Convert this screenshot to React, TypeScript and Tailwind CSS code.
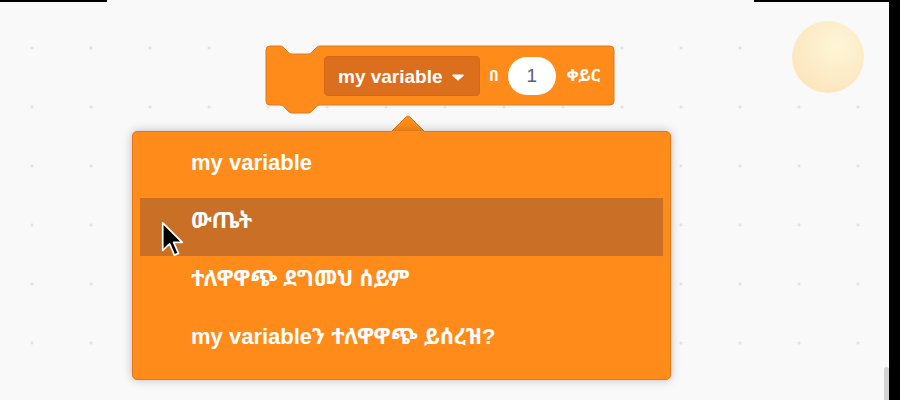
import React from "react";

const menuItems = [
  { label: "my variable" },
  { label: "ውጤት", active: true },
  { label: "ተለዋዋጭ ደግመህ ሰይም" },
  { label: "my variableን ተለዋዋጭ ይሰረዝ?" },
];

const font = {
  fontFamily:
    '"Liberation Sans", "Noto Sans Ethiopic", "Abyssinica SIL", "Noto Sans", sans-serif',
};

function Cursor() {
  return (
    <svg width="24" height="38" viewBox="-1 -1 14 22" className="absolute left-[161px] top-[221px]">
      <path
        d="M0,0 L0,16 L4,12.2 L6.8,18.8 L9.2,17.8 L6.4,11.4 L11.4,11.4 Z"
        fill="#000"
        stroke="#fff"
        strokeWidth={1}
        strokeLinejoin="round"
      />
    </svg>
  );
}

function Block() {
  return (
    <>
      {/* block shape */}
      <svg width="352" height="72" className="absolute left-[265px] top-[45px]">
        <path
          d="M1,5 A4,4 0 0 1 5,1 H15 c2,0 3,1 4,2 l4,4 c1,1 2,2 4,2 h16 c2,0 3,-1 4,-2 l4,-4 c1,-1 2,-2 4,-2 H345 a4,4 0 0 1 4,4 V56 a4,4 0 0 1 -4,4 H55 c-2,0 -3,1 -4,2 l-4,4 c-1,1 -2,2 -4,2 h-16 c-2,0 -3,-1 -4,-2 l-4,-4 c-1,-1 -2,-2 -4,-2 H5 a4,4 0 0 1 -4,-4 Z"
          fill="#ff8c1a"
          stroke="#e07818"
          strokeWidth={1}
        />
      </svg>
      {/* block content */}
      <div
        className="absolute left-[324px] top-[56px] h-[40px] flex items-center text-white"
        style={font}
      >
        <div className="w-[156px] h-[40px] rounded-[4px] bg-[#db6f1e] border border-[#d26a1a] flex items-center pl-[13px]">
          <span className="text-[19px] font-bold leading-none">my variable</span>
          <svg width="12" height="7" viewBox="0 0 12 7" className="ml-[9px] mt-[2px]">
            <path d="M1,0.5 H11 a0.8,0.8 0 0 1 0.6,1.3 L6.6,6.3 a0.8,0.8 0 0 1 -1.2,0 L0.4,1.8 A0.8,0.8 0 0 1 1,0.5 Z" fill="#fff" />
          </svg>
        </div>
        <span className="ml-[9px] text-[15px] font-bold">በ</span>
        <div className="ml-[9px] w-[48px] h-[38px] rounded-full bg-white flex items-center justify-center">
          <span className="text-[19px] text-[#575e75]">1</span>
        </div>
        <span className="ml-[11px] text-[17px] font-bold">ቀይር</span>
      </div>
    </>
  );
}

function Menu() {
  return (
    <>
      {/* pointer */}
      <svg width="40" height="20" className="absolute left-[388px] top-[114px]">
        <path d="M3,18 L18,3 Q20,1 22,3 L37,18 Z" fill="#ff8c1a" stroke="#e07818" strokeWidth={1} />
      </svg>
      <div
        className="absolute left-[132px] top-[131px] w-[539px] h-[249px] rounded-[5px] bg-[#ff8c1a] border border-[#e07818] shadow-[0_0_10px_rgba(0,0,0,0.25)] pt-[8px] px-[7px] flex flex-col"
        style={font}
      >
        {menuItems.map((item) => (
          <div
            key={item.label}
            className={`h-[58px] shrink-0 pl-[51px] pt-[10px] text-white font-bold text-[22px] leading-[26px] ${
              item.active ? "bg-[#c96f26]" : ""
            }`}
          >
            {item.label}
          </div>
        ))}
      </div>
      {/* cover the pointer's bottom stroke so it merges with menu */}
      <div className="absolute left-[392px] top-[131px] w-[32px] h-[2px] bg-[#ff8c1a]" />
    </>
  );
}

export default function App() {
  return (
    <div className="w-[900px] h-[400px] flex bg-black overflow-hidden">
      <div className="relative flex-1 h-full bg-[#f9f9f9] bg-[radial-gradient(circle,#dcdcdc_1.1px,transparent_1.5px)] bg-[length:59px_59px] bg-[position:2.5px_18.5px]">
        {/* top edge strips */}
        <div className="flex h-[2px]">
          <div className="w-[107px] bg-black" />
          <div className="flex-1" />
          <div className="w-[135px] bg-black" />
        </div>

        {/* sun sprite */}
        <div className="absolute left-[792px] top-[21px] w-[72px] h-[72px] rounded-full bg-[radial-gradient(circle_at_62%_35%,#fdf6d4_0%,#fde9c2_55%,#fddfb4_100%)] opacity-95" />

        <Block />
        <Menu />
        <Cursor />

        {/* scrollbar */}
        <div className="absolute right-0 top-[367px] w-[5px] h-[40px] rounded-t-[3px] bg-[#d2d2d2]" />
      </div>
      <div className="w-[11px] h-full bg-black" />
    </div>
  );
}
